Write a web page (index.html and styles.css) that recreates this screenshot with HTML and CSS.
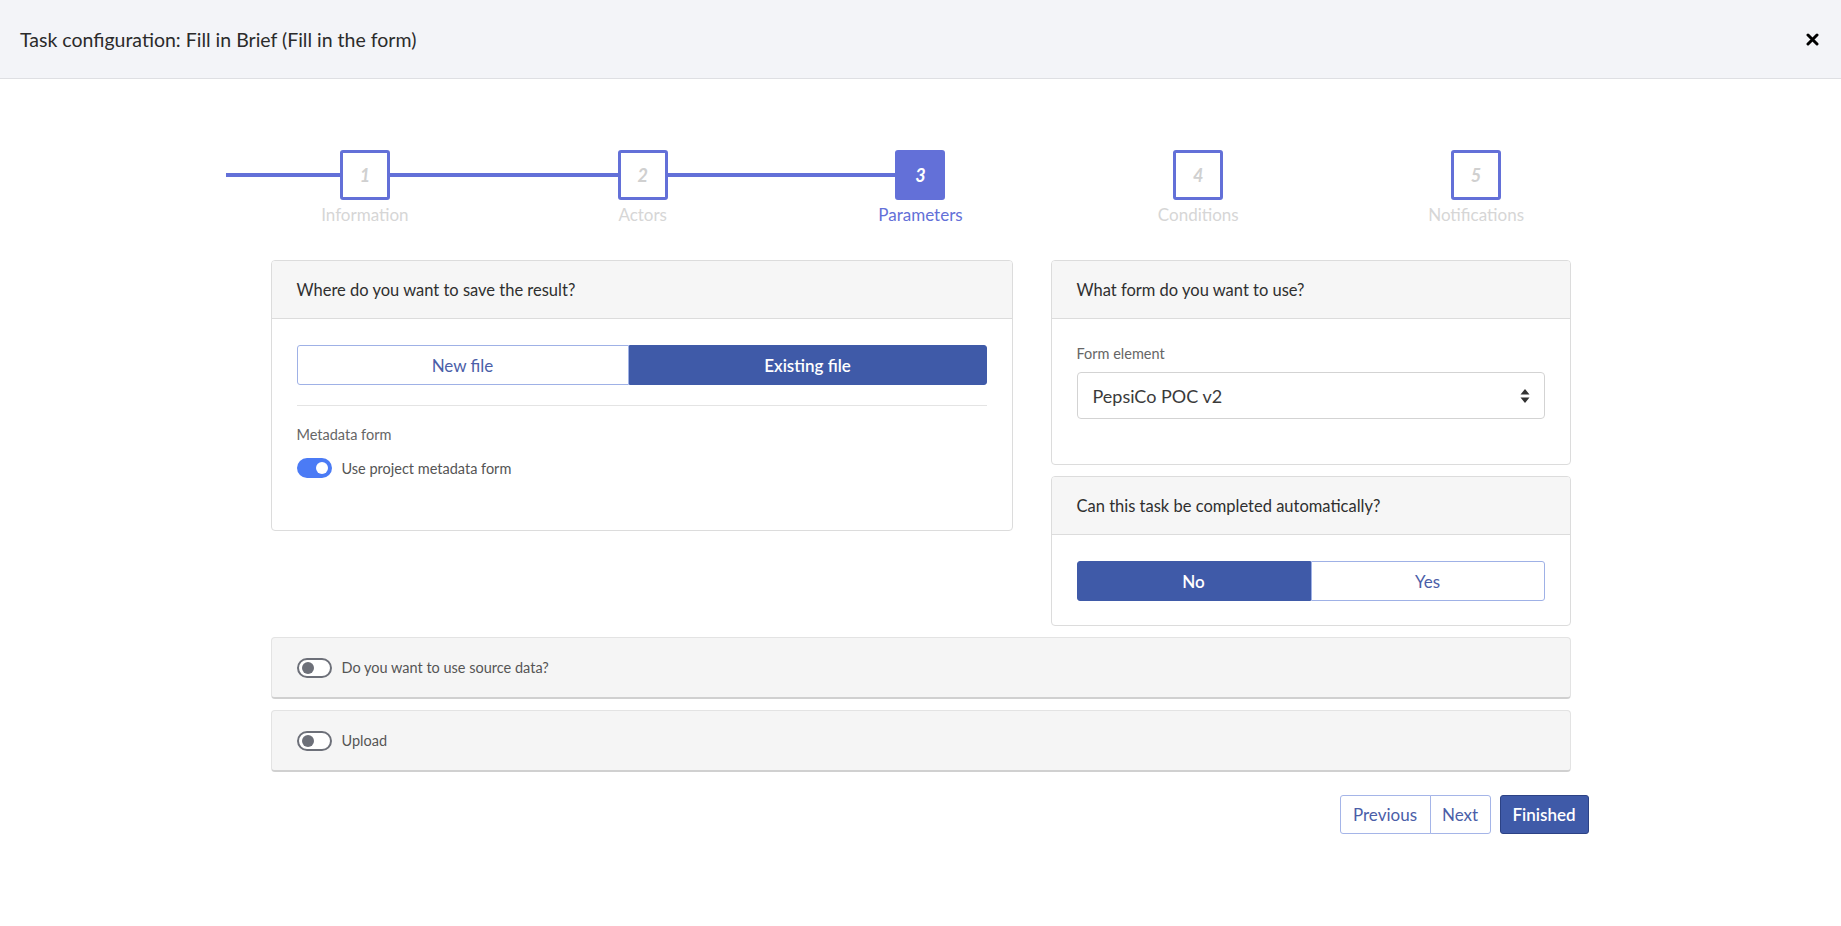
FILE: index.html
```html
<!DOCTYPE html>
<html lang="en">
    <head>
        <meta charset="UTF-8">
        <title>Task configuration</title>
        <link rel="stylesheet" href="styles.css">
    </head>
    <body>
        <div class="modalHeader">
            <h1 class="modalTitle">Task configuration: Fill in Brief (Fill in the form)</h1>
            <button class="closeButton" aria-label="Close">
                <svg width="13" height="13" viewBox="0 0 13 13">
                    <path d="M2 2 L11 11 M11 2 L2 11" stroke="#000" stroke-width="3" stroke-linecap="round"/>
                </svg>
            </button>
        </div>

        <div class="wizard">
            <!-- steps across the top -->
            <div class="stepper">
                <div class="step">
                    <div class="stepLine done"></div>
                    <div class="stepBox">1</div>
                    <div class="stepLine done"></div>
                    <div class="stepLabel">Information</div>
                </div>
                <div class="step">
                    <div class="stepLine done"></div>
                    <div class="stepBox">2</div>
                    <div class="stepLine done"></div>
                    <div class="stepLabel">Actors</div>
                </div>
                <div class="step current">
                    <div class="stepLine done"></div>
                    <div class="stepBox">3</div>
                    <div class="stepLine"></div>
                    <div class="stepLabel">Parameters</div>
                </div>
                <div class="step">
                    <div class="stepLine"></div>
                    <div class="stepBox">4</div>
                    <div class="stepLine"></div>
                    <div class="stepLabel">Conditions</div>
                </div>
                <div class="step">
                    <div class="stepLine"></div>
                    <div class="stepBox">5</div>
                    <div class="stepLine"></div>
                    <div class="stepLabel">Notifications</div>
                </div>
            </div>

            <div class="columns">
                <div class="card">
                    <div class="cardHeader">Where do you want to save the result?</div>
                    <div class="cardBody saveBody">
                        <div class="segmented">
                            <button class="segment newFile">New file</button>
                            <button class="segment existingFile active">Existing file</button>
                        </div>
                        <hr class="divider">
                        <div class="fieldLabel">Metadata form</div>
                        <label class="switchRow">
                            <span class="switch on"><span class="knob"></span></span>
                            <span class="switchText">Use project metadata form</span>
                        </label>
                    </div>
                </div>

                <div class="sideColumn">
                    <div class="card">
                        <div class="cardHeader">What form do you want to use?</div>
                        <div class="cardBody formBody">
                            <div class="fieldLabel">Form element</div>
                            <div class="selectBox">
                                <span>PepsiCo POC v2</span>
                                <svg width="10" height="16" viewBox="0 0 10 16">
                                    <path d="M5 1 L9.5 6.5 L0.5 6.5 Z M5 15 L9.5 9.5 L0.5 9.5 Z" fill="#333"/>
                                </svg>
                            </div>
                        </div>
                    </div>
                    <div class="card">
                        <div class="cardHeader">Can this task be completed automatically?</div>
                        <div class="cardBody autoBody">
                            <div class="segmented">
                                <button class="segment half active">No</button>
                                <button class="segment half">Yes</button>
                            </div>
                        </div>
                    </div>
                </div>
            </div>

            <div class="panel">
                <span class="switch off"><span class="knob"></span></span>
                <span class="panelText">Do you want to use source data?</span>
            </div>
            <div class="panel">
                <span class="switch off"><span class="knob"></span></span>
                <span class="panelText">Upload</span>
            </div>

            <div class="footer">
                <div class="btnGroup">
                    <button class="btn outline prev">Previous</button>
                    <button class="btn outline next">Next</button>
                </div>
                <button class="btn primary">Finished</button>
            </div>
        </div>
    </body>
</html>
```

FILE: styles.css
```css
body {
    margin: 0;
    font-family: "Lato", "Liberation Sans", sans-serif;
    color: #333;
    background: #fff;
}
button {
    font-family: inherit;
    cursor: pointer;
}

.modalHeader {
    height: 78px;
    background-color: #f3f4f8;
    border-bottom: 1px solid #dedfe3;
    display: flex;
    align-items: center;
    justify-content: space-between;
    padding: 0 22px 0 20px;
}
.modalTitle {
    margin: 0;
    font-size: 19.5px;
    font-weight: 400;
    color: #2b2b2b;
}
.closeButton {
    border: none;
    background: none;
    padding: 0;
    display: flex;
}

.wizard {
    padding-top: 71px;
}

/* stepper */
.stepper {
    width: 1389px;
    margin: 0 auto;
    display: grid;
    grid-template-columns: repeat(5, 1fr);
}
.step {
    display: grid;
    grid-template-columns: 1fr 50px 1fr;
    align-items: center;
}
.stepLine {
    height: 4px;
}
.stepLine.done {
    background-color: #6370d8;
}
.stepBox {
    width: 50px;
    height: 50px;
    box-sizing: border-box;
    border: 3px solid #6370d8;
    border-radius: 3px;
    background: #fff;
    display: flex;
    align-items: center;
    justify-content: center;
    font-style: italic;
    font-weight: 700;
    font-size: 18px;
    color: #d0d0d0;
}
.step.current .stepBox {
    background-color: #6370d8;
    color: #fff;
}
.stepLabel {
    grid-column: 1 / 4;
    text-align: center;
    margin-top: 4px;
    font-size: 17px;
    color: #d6d6d6;
}
.step.current .stepLabel {
    color: #6370d8;
}

/* cards */
.columns {
    width: 1300px;
    margin: 35px auto 0;
    display: grid;
    grid-template-columns: 742px 520px;
    column-gap: 38px;
    align-items: start;
}
.sideColumn {
    display: flex;
    flex-direction: column;
    gap: 11px;
}
.card {
    border: 1px solid #dcdcdc;
    border-radius: 4px;
    background: #fff;
    overflow: hidden;
}
.cardHeader {
    height: 58px;
    box-sizing: border-box;
    background-color: #f6f6f6;
    border-bottom: 1px solid #dcdcdc;
    display: flex;
    align-items: center;
    padding: 0 25px;
    font-size: 16.5px;
    color: #2f2f2f;
}
.cardBody {
    padding: 25px 25px;
}
.saveBody {
    padding-top: 26px;
    padding-bottom: 52px;
}
.formBody {
    padding-top: 26px;
    padding-bottom: 45px;
}
.autoBody {
    padding-top: 26px;
    padding-bottom: 24px;
}

.segmented {
    display: flex;
    height: 40px;
}
.segment {
    border: 1px solid #9fb1e6;
    background: #fff;
    color: #4b5ea8;
    font-size: 17px;
    padding: 0;
}
.segment:first-child {
    border-radius: 3px 0 0 3px;
}
.segment:last-child {
    border-radius: 0 3px 3px 0;
}
.segment.active {
    background-color: #3f5aa8;
    border-color: #3f5aa8;
    color: #fff;
    font-weight: 600;
}
.segment.newFile {
    width: 332px;
}
.segment.existingFile {
    flex: 1;
}
.segment.half {
    flex: 1;
}

.divider {
    border: none;
    border-top: 1px solid #e4e4e4;
    margin: 20px 0 20px;
}
.fieldLabel {
    font-size: 14.5px;
    color: #666;
    margin-bottom: 10px;
}
.saveBody .fieldLabel {
    margin-bottom: 15px;
}
.switchRow {
    display: flex;
    align-items: center;
    gap: 10px;
}
.switchText {
    font-size: 14.5px;
    color: #555;
}

.switch {
    width: 35px;
    height: 20px;
    box-sizing: border-box;
    border-radius: 10px;
    display: flex;
    align-items: center;
    padding: 0 3px;
    flex-shrink: 0;
}
.switch .knob {
    width: 12px;
    height: 12px;
    border-radius: 50%;
}
.switch.on {
    background-color: #4b7bf5;
    justify-content: flex-end;
    padding: 0 4px;
}
.switch.on .knob {
    background: #fff;
}
.switch.off {
    border: 2px solid #6d7079;
    background: #fff;
}
.switch.off .knob {
    background: #6d7079;
}

.selectBox {
    height: 47px;
    box-sizing: border-box;
    border: 1px solid #d3d3d3;
    border-radius: 4px;
    display: flex;
    align-items: center;
    justify-content: space-between;
    padding: 0 14px 0 15px;
    font-size: 18px;
    color: #3a3a3a;
}

/* bottom panels */
.panel {
    width: 1300px;
    box-sizing: border-box;
    height: 62px;
    margin: 11px auto 0;
    background-color: #f5f5f5;
    border: 1px solid #e3e3e3;
    border-bottom: 2px solid #d0d0d0;
    border-radius: 4px;
    display: flex;
    align-items: center;
    gap: 10px;
    padding: 0 25px;
}
.panelText {
    font-size: 14.5px;
    color: #555;
}

.footer {
    width: 1336px;
    margin: 23px auto 0;
    display: flex;
    justify-content: flex-end;
    gap: 9px;
}
.btnGroup {
    display: flex;
}
.btn {
    height: 39px;
    font-size: 17px;
    border-radius: 3px;
    padding: 0;
}
.btn.outline {
    background: #fff;
    border: 1px solid #a5b5e8;
    color: #4b5ea8;
}
.btn.prev {
    width: 91px;
    border-radius: 3px 0 0 3px;
}
.btn.next {
    width: 61px;
    border-radius: 0 3px 3px 0;
    margin-left: -1px;
}
.btn.primary {
    width: 89px;
    background-color: #3f5aa8;
    border: 1px solid #2c4285;
    color: #fff;
    font-weight: 600;
}
```
